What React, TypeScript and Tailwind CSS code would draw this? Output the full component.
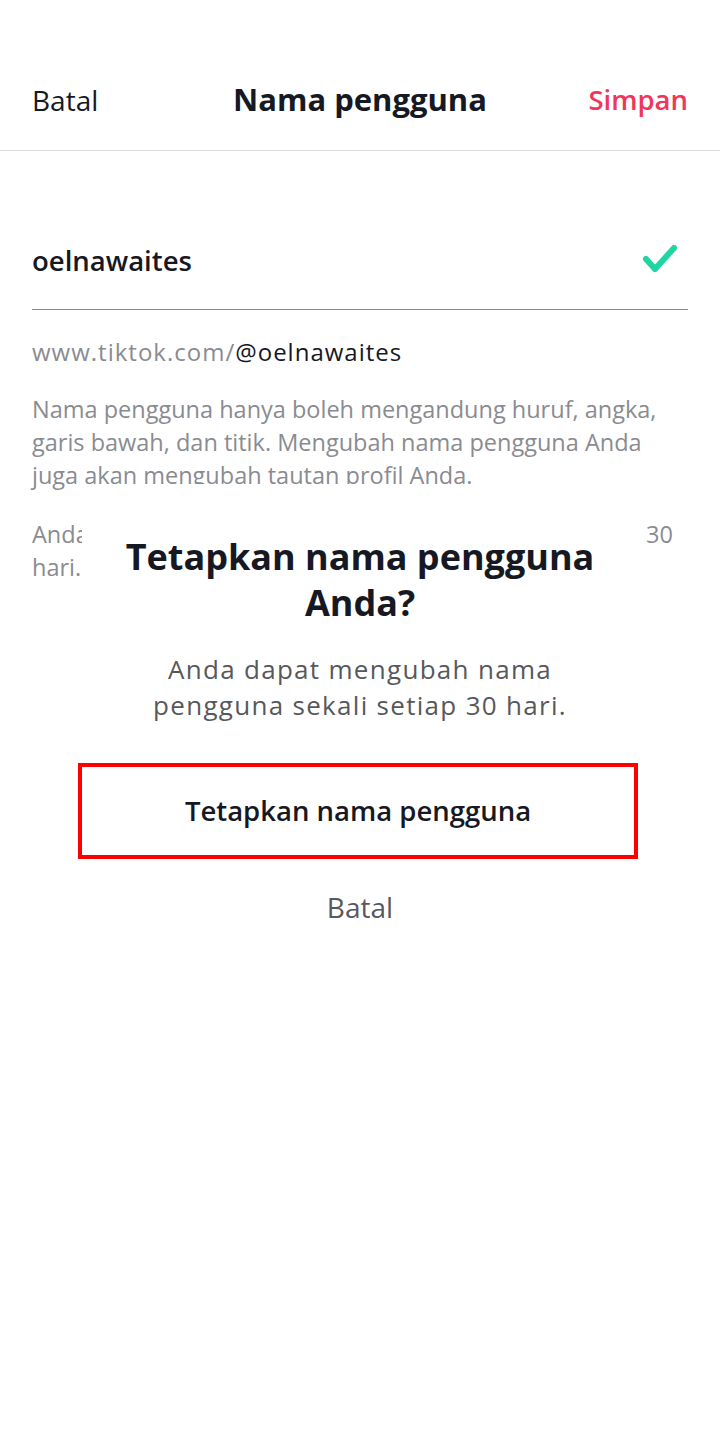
export default function App() {
  return (
    <div className="relative h-[1440px] w-[720px] overflow-hidden bg-white font-['Open_Sans','Liberation_Sans',sans-serif] text-[#161823]">
      {/* top bar */}
      <div className="grid h-[151px] grid-cols-[1fr_auto_1fr] items-center border-b border-[#dcdcdc] px-8 pt-[49px]">
        <span className="text-[28px]">Batal</span>
        <span className="text-[31px] font-bold">Nama pengguna</span>
        <span className="justify-self-end text-[27.5px] font-semibold text-[#f2365a]">Simpan</span>
      </div>

      <div className="px-8">
        <div className="flex h-[159px] items-center justify-between border-b border-[#8a8a8a] pt-[61px]">
          <span className="text-[27.5px] font-semibold">oelnawaites</span>
          <svg width="36" height="30" viewBox="0 0 36 30" className="mb-[3px] mr-[10px]">
            <path d="M4 15 L13 25 L32 4" fill="none" stroke="#20d6a0" strokeWidth="6" strokeLinecap="round" strokeLinejoin="round" />
          </svg>
        </div>
        <p className="mt-[25px] text-[24px] leading-[33px] tracking-[1px] text-[#8a8b91]">
          www.tiktok.com/<span className="text-[#161823]">@oelnawaites</span>
        </p>
        <p className="mt-[25px] text-[23.5px] leading-[33px] text-[#8a8b91]">
          Nama pengguna hanya boleh mengandung huruf, angka, garis bawah, dan titik. Mengubah nama pengguna Anda juga akan mengubah tautan profil Anda.
        </p>
        <p className="mt-[26px] pr-[15px] text-justify text-[23.5px] leading-[33px] text-[#8a8b91]">
          Anda <span className="tracking-[-1.2px]">hanya dapat mengubah nama pengguna sekali setiap</span>
          <span className="ml-[10px]"> 30</span> hari.
        </p>
      </div>

      {/* confirm dialog */}
      <div className="absolute left-[82px] top-[484px] flex h-[956px] w-[556px] flex-col items-center bg-white pt-[50px] text-center">
        <h2 className="whitespace-nowrap text-[36px] font-bold leading-[46px]">
          Tetapkan nama pengguna
          <br />
          Anda?
        </h2>
        <p className="mt-[25px] whitespace-nowrap text-[26px] leading-[36px] tracking-[1.3px] text-[#57585c]">
          Anda dapat mengubah nama
          <br />
          pengguna sekali setiap 30 hari.
        </p>
        <button className="mr-[4px] mt-[40px] flex h-[96px] w-[560px] shrink-0 items-center justify-center border-4 border-[#ff0000] text-[27.5px] font-semibold">
          Tetapkan nama pengguna
        </button>
        <button className="mt-[27px] text-[28px] text-[#57585c]">Batal</button>
      </div>
    </div>
  );
}
